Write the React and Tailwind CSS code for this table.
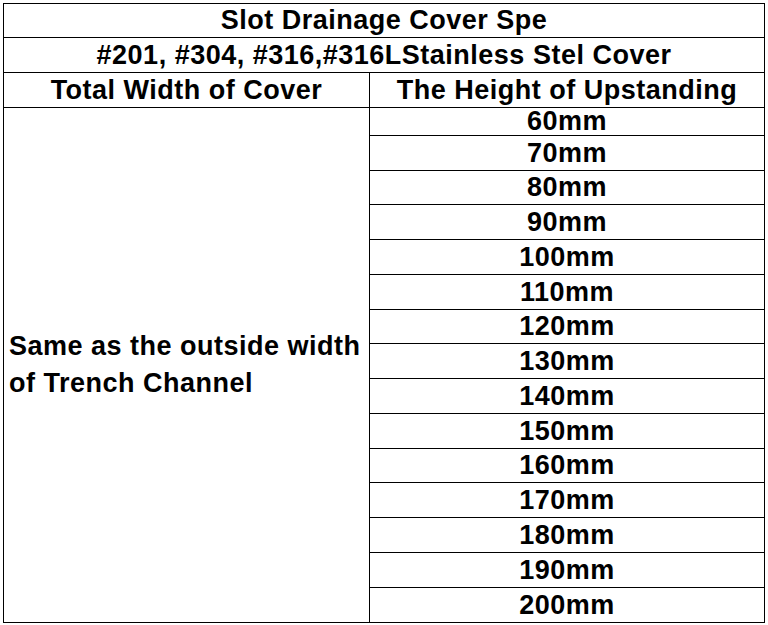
const heights = ['60mm', '70mm', '80mm', '90mm', '100mm', '110mm', '120mm', '130mm', '140mm', '150mm', '160mm', '170mm', '180mm', '190mm', '200mm'];

// row heights for the value rows (the first one is shorter in the source)
const rowH = ['h-[27px]', 'h-[35px]', 'h-[34px]', 'h-[35px]', 'h-[35px]', 'h-[35px]', 'h-[34px]', 'h-[35px]', 'h-[35px]', 'h-[35px]', 'h-[34px]', 'h-[35px]', 'h-[35px]', 'h-[35px]', 'h-[35px]'];

export default function App() {
  const cell = 'border border-black text-center font-bold p-0 leading-none';

  return (
    <div className="bg-white w-[768px] h-[625px] pt-[3px] pl-[3px]" style={{ fontFamily: '"Liberation Sans", Arial, sans-serif' }}>
      <table className="border-collapse w-[761px] text-[27px] tracking-[0.5px] text-black table-fixed">
        <colgroup>
          <col className="w-[366px]" />
          <col className="w-[395px]" />
        </colgroup>
        <tbody>
          <tr className="h-[34px]">
            <td colSpan={2} className={cell}>Slot Drainage Cover Spe</td>
          </tr>
          <tr className="h-[35px]">
            <td colSpan={2} className={cell}>#201, #304, #316,#316LStainless Stel Cover</td>
          </tr>
          <tr className="h-[35px]">
            <td className={cell}>Total Width of Cover</td>
            <td className={cell}>The Height of Upstanding</td>
          </tr>
          {heights.map((h, i) => (
            <tr key={h} className={rowH[i]}>
              {i === 0 && (
                <td rowSpan={heights.length} className="border border-black font-bold text-left align-middle pl-[5px] leading-[37px] whitespace-nowrap">
                  Same as the outside width<br />of Trench Channel
                </td>
              )}
              <td className={cell}>{h}</td>
            </tr>
          ))}
        </tbody>
      </table>
    </div>
  );
}
